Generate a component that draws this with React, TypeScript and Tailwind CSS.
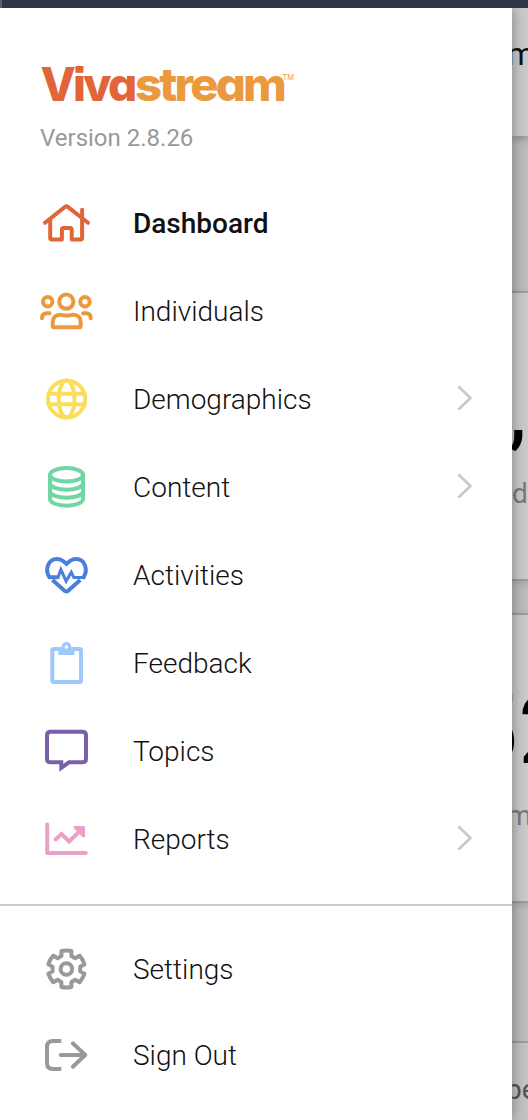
import React from "react";
import { clsx } from "clsx";

interface MenuItem {
  label: string;
  color: string;
  icon: React.ReactNode;
  active?: boolean;
  hasChildren?: boolean;
}

const HomeIcon = () => (
  <>
    <path d="M6 23.8 26 7.9q1.4-1 2.8 0L49 23.8" />
    <path d="M11.2 21v18q0 1.4 1.4 1.4h10.3V30.5q0-1.6 1.6-1.6h6.6q1.6 0 1.6 1.6v9.9h9.2q1.2 0 1.2-1.4V10.8" />
  </>
);

const UsersIcon = () => (
  <>
    <circle cx="27.3" cy="14.7" r="7.1" />
    <circle cx="8.7" cy="14.7" r="4.7" />
    <circle cx="46" cy="14.7" r="4.7" />
    <path d="M13.7 38.8v-3.6c0-4.6 3-7.5 7.4-7.5 2.2 0 3.4.9 6.6.9s4.4-.9 6.6-.9c4.4 0 7.4 2.9 7.4 7.5v3.6q0 1.5-1.5 1.5h-25q-1.5 0-1.5-1.5z" />
    <path d="M3 31.3v-.6c0-2.6 1.8-4.5 4.6-4.5h3M51.7 31.3v-.6c0-2.6-1.8-4.5-4.6-4.5h-3" />
  </>
);

const GlobeIcon = () => (
  <>
    <circle cx="27.6" cy="24" r="18.6" />
    <ellipse cx="27.6" cy="24" rx="7.9" ry="18.6" />
    <path d="M9.5 18.8h36.2M9.5 29.2h36.2" />
  </>
);

const DatabaseIcon = () => (
  <>
    <ellipse cx="27.5" cy="11.8" rx="16.5" ry="6.7" />
    <path d="M11 11.8V36c0 3.7 7.4 6.7 16.5 6.7S44 39.7 44 36V11.8" />
    <path d="M11 20.3c0 3.6 7.4 6.5 16.5 6.5S44 23.9 44 20.3M11 28.2c0 3.6 7.4 6.5 16.5 6.5S44 31.8 44 28.2" />
  </>
);

const HeartIcon = () => (
  <>
    <path
      strokeLinejoin="miter"
      d="M18.5 26.3H10.5C5.5 18.5 9.2 7.9 17.8 7.9c4.5 0 6.7 1.7 9.7 5 3-3.3 5.2-5 9.7-5 8.6 0 12.3 10.6 7.3 18.4"
    />
    <path
      strokeWidth="3"
      strokeLinejoin="miter"
      d="M11 26.6h8l2.9-8 5.2 11.6 5.2-9 2.6 5.4H45"
    />
    <path strokeLinecap="butt" d="M13.5 29l12.4 11q1.5 1.1 3 0L41.2 29" />
  </>
);

const ClipboardIcon = () => (
  <>
    <rect x="13.3" y="10" width="28.7" height="33" rx="1.5" />
    <path fill="currentColor" stroke="none" d="M19.3 9h16.2v5.8q0 1.2-1.2 1.2H20.5q-1.2 0-1.2-1.2z" />
    <circle cx="27.4" cy="8" r="3.4" fill="white" strokeWidth="3.3" />
  </>
);

const CommentIcon = () => (
  <path
    strokeLinejoin="miter"
    d="M11.5 4.7h32Q47 4.7 47 8.2v23.6q0 3.5-3.5 3.5H30l-7.7 5.5v-5.5H11.5Q8 35.3 8 31.8V8.2q0-3.5 3.5-3.5z"
  />
);

const ChartIcon = () => (
  <>
    <path d="M8.2 9.5v28.4h38.6" />
    <path strokeLinejoin="miter" d="M16.5 24.5l6-5.5 7.6 7.5L41.5 15.5" />
    <path
      fill="currentColor"
      stroke="none"
      d="M36 11h8.8q1.2 0 1.2 1.2V21c0 1.4-1.6 2-2.5 1l-8.5-8.5c-1-1-.4-2.5 1-2.5z"
    />
  </>
);

const GearIcon = () => (
  <g transform="translate(27.4 24)">
    <circle r="5.8" />
    <path d="M-5-18Q0-19 5-18V-13L8.8-10.8 13.1-13.3Q16.5-9.5 18.1-4.7L13.8-2.2V2.2L18.1 4.7Q16.5 9.5 13.1 13.3L8.8 10.8 5 13V18Q0 19-5 18V13L-8.8 10.8-13.1 13.3Q-16.5 9.5-18.1 4.7L-13.8 2.2V-2.2L-18.1-4.7Q-16.5-9.5-13.1-13.3L-8.8-10.8-5-13z" />
  </g>
);

const SignOutIcon = () => (
  <>
    <path strokeLinecap="butt" d="M22.3 10H14q-6 0-6 6v16q0 6 6 6h8.3" />
    <path d="M21.8 24H46M33.8 12.3 46.3 24 33.8 35.7" />
  </>
);

const mainItems: MenuItem[] = [
  { label: "Dashboard", color: "text-[#e2653a]", icon: <HomeIcon />, active: true },
  { label: "Individuals", color: "text-[#eb993f]", icon: <UsersIcon /> },
  { label: "Demographics", color: "text-[#fade5b]", icon: <GlobeIcon />, hasChildren: true },
  { label: "Content", color: "text-[#70d6a3]", icon: <DatabaseIcon />, hasChildren: true },
  { label: "Activities", color: "text-[#4a7fdc]", icon: <HeartIcon /> },
  { label: "Feedback", color: "text-[#9fc9fb]", icon: <ClipboardIcon /> },
  { label: "Topics", color: "text-[#7a60aa]", icon: <CommentIcon /> },
  { label: "Reports", color: "text-[#e8a1c9]", icon: <ChartIcon />, hasChildren: true },
];

const footerItems: MenuItem[] = [
  { label: "Settings", color: "text-[#999999]", icon: <GearIcon /> },
  { label: "Sign Out", color: "text-[#999999]", icon: <SignOutIcon /> },
];

const MenuRow = ({ label, color, icon, active, hasChildren }: MenuItem) => (
  <li className="flex h-full items-center pr-10 pl-[39px]">
    <svg
      viewBox="0 0 55 48"
      fill="none"
      stroke="currentColor"
      strokeWidth="4"
      strokeLinecap="round"
      strokeLinejoin="round"
      className={clsx("h-12 w-[55px] shrink-0", color)}
    >
      {icon}
    </svg>
    <span
      className={clsx(
        "mt-0.5 ml-[39px] flex-1 text-[28px] leading-8 text-[#111111]",
        active ? "font-medium" : "font-light"
      )}
    >
      {label}
    </span>
    {hasChildren && (
      <svg
        viewBox="0 0 16 28"
        fill="none"
        stroke="#c8c8c8"
        strokeWidth="2.6"
        className="-mt-0.5 h-7 w-4"
      >
        <path d="M2.5 2.5 14.5 14 2.5 25.5" />
      </svg>
    )}
  </li>
);

const Logo = () => (
  <svg viewBox="0 0 260 46" className="h-[46px] w-[260px] overflow-visible">
    <g
      className="font-['Inter'] font-extrabold"
      fontSize="46.5"
      letterSpacing="-2.8"
      style={{ fontFeatureSettings: '"cv11", "ss07"' }}
    >
      <text x="0.5" y="39" fill="#e2653a" textLength="94" lengthAdjust="spacingAndGlyphs">
        Viva
      </text>
      <text x="95" y="39" fill="#eb993f" textLength="149" lengthAdjust="spacingAndGlyphs">
        stream
      </text>
    </g>
    <text x="242.5" y="18" fontSize="7.5" fill="#eb993f" className="font-['Inter']">
      TM
    </text>
  </svg>
);

const Drawer = () => (
  <aside className="z-10 flex w-[512px] shrink-0 flex-col bg-white shadow-[0_0_14px_rgba(0,0,0,0.4)]">
    <header className="flex flex-col pt-[54px] pl-10">
      <Logo />
      <p className="mt-3.5 text-2xl leading-8 text-[#999999]">Version 2.8.26</p>
    </header>
    <ul className="mt-[25px] grid auto-rows-[88px]">
      {mainItems.map((item) => (
        <MenuRow key={item.label} {...item} />
      ))}
    </ul>
    <ul className="mt-[21px] grid auto-rows-[86px] border-t-2 border-[#cacaca] pt-5">
      {footerItems.map((item) => (
        <MenuRow key={item.label} {...item} />
      ))}
    </ul>
  </aside>
);

// Sliver of the dimmed page that stays visible next to the open drawer
const PageBehind = () => (
  <main className="flex w-4 flex-col overflow-hidden bg-[#bdbdbd] whitespace-nowrap">
    <div className="z-[1] h-32 shrink-0 bg-[#cbcbcb] pt-[26px] shadow-[0_2px_8px_rgba(0,0,0,0.3)]">
      <p className="-ml-[5px] text-[32px] leading-10 text-[#111111]">m</p>
    </div>
    <section className="mt-[155px] h-[290px] shrink-0 border-y-2 border-[#9e9e9e] bg-[#cbcbcb] pt-[72px] shadow-[0_2px_6px_rgba(0,0,0,0.15)]">
      <p className="-ml-[3px] text-[78px] leading-[96px] font-medium text-black">,</p>
      <p className="mt-[17px] text-[28px] leading-8 text-[#7b7b7b]">d</p>
    </section>
    <section className="mt-8 h-[290px] shrink-0 border-y-2 border-[#9e9e9e] bg-[#cbcbcb] pt-[67px] shadow-[0_2px_6px_rgba(0,0,0,0.15)]">
      <p className="-ml-12 text-[96px] leading-[96px] text-black">52</p>
      <p className="mt-[22px] -ml-[5px] text-[28px] leading-8 text-[#7b7b7b]">m</p>
    </section>
    <section className="mt-[138px] flex-1 border-t-2 border-[#9e9e9e] bg-[#c4c4c4] pt-[31px]">
      <p className="-ml-1.5 text-[28px] leading-8 text-[#555555]">pe</p>
    </section>
  </main>
);

export default function App() {
  return (
    <div className="flex h-[1120px] w-[528px] flex-col overflow-hidden bg-white font-['Roboto',sans-serif]">
      <div className="z-20 h-2 shrink-0 border-l-2 border-[#5c5e6b] bg-[#323545]" />
      <div className="flex min-h-0 flex-1">
        <Drawer />
        <PageBehind />
      </div>
    </div>
  );
}
